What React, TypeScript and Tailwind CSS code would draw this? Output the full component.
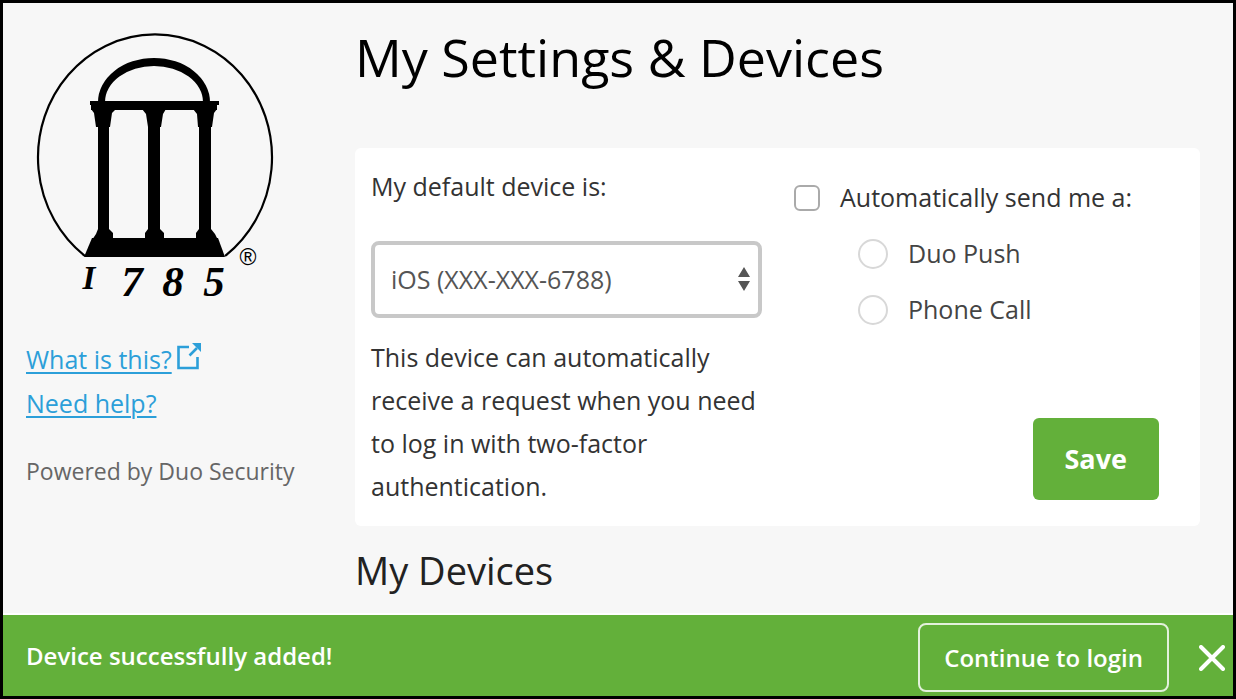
import React, { useState } from 'react';

const METHODS = [
  { id: 'push', label: 'Duo Push' },
  { id: 'phone', label: 'Phone Call' },
];

const ArchLogo = () => (
  <svg viewBox="20 20 270 290" className="w-[270px] h-[290px]" role="img" aria-label="Arch logo">
    <path d="M85 257A117 123 0 1 1 225 257" fill="none" stroke="#000" strokeWidth="2.2" />
    {/* arch */}
    <path d="M98 103A56 44 0 0 1 210 103H203A49 36 0 0 0 105 103Z" />
    {/* beam */}
    <path d="M90 102H219V106H217V111H91V106H90Z" />
    {/* columns */}
    <path d="M91 110H116L112 114L110 128H109V230L113 234V241H92L96 235L98 230V128H96L94 114Z" />
    <path d="M142 110H166L163 115L161 128H160V230L164 234V241H145V234L148 230V128H148L146 115Z" />
    <path d="M193 110H217L214 114L212 128H211V230L215 235L218 241H196V234L199 230V128H198L197 115Z" />
    {/* base */}
    <path d="M92 239H218L225 258H84Z" />
    <g fontFamily='"Liberation Serif", serif' fontStyle="italic" fontWeight="700" textAnchor="middle">
      <text x="89" y="290" fontSize="33">I</text>
      <text x="132" y="297" fontSize="43">7</text>
      <text x="173" y="297" fontSize="43">8</text>
      <text x="214" y="297" fontSize="43">5</text>
    </g>
    <text x="248" y="266" fontSize="23" textAnchor="middle" fontFamily='"Liberation Sans", sans-serif'>®</text>
  </svg>
);

const ExternalIcon = () => (
  <svg viewBox="0 0 26 28" className="w-[26px] h-7" fill="none" stroke="#2c9fd9" strokeWidth="2.6" aria-hidden="true">
    <path d="M13 4H2.5V25H21.500V14M13.500 12.500L21 5" />
    <path d="M16 0H25V9Z" fill="#2c9fd9" stroke="none" />
  </svg>
);

const App = () => {
  const [auto, setAuto] = useState(false);
  const [method, setMethod] = useState('');
  const [showBar, setShowBar] = useState(true);

  return (
    <div className="min-h-screen flex flex-col border-[3px] border-black bg-[#f7f7f7] text-[25px] text-[#333] font-['Open_Sans','Noto_Sans',sans-serif]">
      <div className="flex-1 flex">
        <aside className="w-[352px] shrink-0 pt-4 pl-[23px]">
          <div className="-ml-1.5">
            <ArchLogo />
          </div>
          <div className="mt-7 flex gap-1 leading-[44px]">
            <a href="#what" className="text-[#2c9fd9] underline underline-offset-3 decoration-2">What is this?</a>
            <span className="pt-1.5">
              <ExternalIcon />
            </span>
          </div>
          <div className="leading-[44px]">
            <a href="#help" className="text-[#2c9fd9] underline underline-offset-3 decoration-2">Need help?</a>
          </div>
          <p className="mt-6 text-[23px] leading-[44px] text-[#666]">Powered by Duo Security</p>
        </aside>

        <main className="flex-1 pt-6 pr-[33px]">
          <h1 className="text-[52px] leading-[60px] text-black">My Settings &amp; Devices</h1>

          <section className="mt-[61px] flex gap-8 rounded-md bg-white px-4 pt-4 pb-[18px]">
            <div className="w-[391px] shrink-0">
              <label htmlFor="device" className="block leading-[44px]">My default device is:</label>
              <div className="relative mt-[33px]">
                <select
                  id="device"
                  className="block w-full h-[77px] appearance-none rounded-lg border-4 border-[#c8c8c8] bg-white pl-4 pr-10 text-[#555]"
                >
                  <option>iOS (XXX-XXX-6788)</option>
                </select>
                <svg viewBox="0 0 12 24" className="pointer-events-none absolute right-3 top-[26px] w-3 h-6" fill="#555" aria-hidden="true">
                  <path d="M6 0L12 10H0ZM0 14H12L6 24Z" />
                </svg>
              </div>
              <p className="mt-[18px] leading-[43px]">
                This device can automatically receive a request when you need to log in with two-factor authentication.
              </p>
            </div>

            <div className="flex-1 flex flex-col pt-1.5 pb-2">
              <label className="flex items-center h-14 gap-5">
                <input
                  type="checkbox"
                  checked={auto}
                  onChange={(e) => setAuto(e.target.checked)}
                  className="appearance-none size-[26px] rounded-md border-2 border-[#aaa] bg-white checked:bg-[#63b03a]"
                />
                Automatically send me a:
              </label>
              {METHODS.map((m) => (
                <label key={m.id} className="flex items-center h-14 gap-5 pl-16 text-[#444]">
                  <input
                    type="radio"
                    name="method"
                    checked={method === m.id}
                    onChange={() => setMethod(m.id)}
                    className="appearance-none size-[30px] rounded-full border-2 border-[#d8d8d8] bg-white checked:border-8 checked:border-[#63b03a]"
                  />
                  {m.label}
                </label>
              ))}
              <button className="mt-auto mr-[25px] self-end h-[82px] px-8 rounded-md bg-[#63b03a] text-[27px] font-bold text-white">Save</button>
            </div>
          </section>

          <h2 className="mt-5 text-[38px] leading-[48px] text-[#222]">My Devices</h2>
        </main>
      </div>

      {showBar && (
        <div className="flex items-center border-t-2 border-white bg-[#63b03a] h-[83px] pt-1 pl-[23px] pr-2 text-2xl font-semibold text-white">
          <p className="flex-1 pb-1">Device successfully added!</p>
          <button className="h-[69px] px-6 rounded-lg border-2 border-[#e3f1dc]">Continue to login</button>
          <button aria-label="Close" onClick={() => setShowBar(false)} className="ml-[30px]">
            <svg viewBox="0 0 26 26" className="size-[26px]" stroke="#fff" strokeWidth="4" strokeLinecap="round" aria-hidden="true">
              <path d="M2 2L24 24M24 2L2 24" />
            </svg>
          </button>
        </div>
      )}
    </div>
  );
};

export default App;
